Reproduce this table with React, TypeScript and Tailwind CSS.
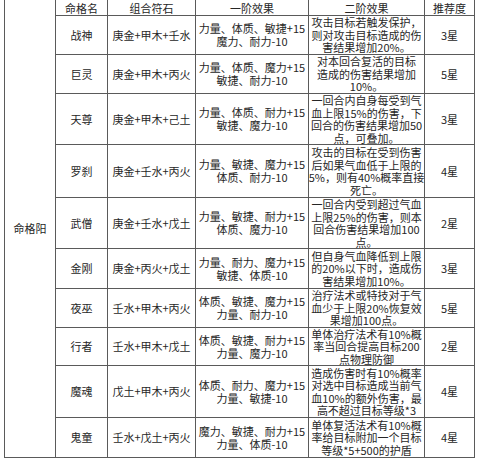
import React from "react";

type Row = {
  name: string;
  combo: string;
  first: string[];
  second: string[];
  rec: string;
};

const rows: Row[] = [
  { name: "战神", combo: "庚金+甲木+壬水", first: ["力量、体质、敏捷+15", "魔力、耐力-10"], second: ["攻击目标若触发保护，", "则对攻击目标造成的伤", "害结果增加20%。"], rec: "3星" },
  { name: "巨灵", combo: "庚金+甲木+丙火", first: ["力量、体质、魔力+15", "敏捷、耐力-10"], second: ["对本回合复活的目标", "造成的伤害结果增加", "10%。"], rec: "5星" },
  { name: "天尊", combo: "庚金+甲木+己土", first: ["力量、体质、耐力+15", "敏捷、魔力-10"], second: ["一回合内自身每受到气", "血上限15%的伤害，下", "回合的伤害结果增加50", "点，可叠加。"], rec: "3星" },
  { name: "罗刹", combo: "庚金+壬水+丙火", first: ["力量、敏捷、魔力+15", "体质、耐力-10"], second: ["攻击的目标在受到伤害", "后如果气血低于上限的", "5%，则有40%概率直接", "死亡。"], rec: "4星" },
  { name: "武僧", combo: "庚金+壬水+戊土", first: ["力量、敏捷、耐力+15", "体质、魔力-10"], second: ["一回合内受到超过气血", "上限25%的伤害，则本", "回合伤害结果增加100", "点。"], rec: "2星" },
  { name: "金刚", combo: "庚金+丙火+戊土", first: ["力量、耐力、魔力+15", "敏捷、体质-10"], second: ["但自身气血降低到上限", "的20%以下时，造成伤", "害结果增加10%。"], rec: "3星" },
  { name: "夜巫", combo: "壬水+甲木+丙火", first: ["体质、敏捷、魔力+15", "力量、耐力-10"], second: ["治疗法术或特技对于气", "血少于上限20%恢复效", "果增加100点。"], rec: "5星" },
  { name: "行者", combo: "壬水+甲木+戊土", first: ["体质、敏捷、耐力+15", "力量、魔力-10"], second: ["单体治疗法术有10%概", "率当回合提高目标200", "点物理防御"], rec: "2星" },
  { name: "魔魂", combo: "戊土+甲木+丙火", first: ["体质、耐力、魔力+15", "力量、敏捷-10"], second: ["造成伤害时有10%概率", "对选中目标造成当前气", "血10%的额外伤害，最", "高不超过目标等级*3"], rec: "4星" },
  { name: "鬼童", combo: "壬水+戊土+丙火", first: ["魔力、敏捷、耐力+15", "力量、体质-10"], second: ["单体复活法术有10%概", "率给目标附加一个目标", "等级*5+500的护盾"], rec: "4星" },
];

const cell = "bg-white flex flex-col items-center justify-center text-center whitespace-nowrap overflow-hidden";

export default function App() {
  return (
    <div
      className="w-[480px] h-[460px] bg-white text-[#262626] text-[11px] leading-[13px]"
      style={{ fontFamily: '"Noto Sans CJK SC", "Noto Sans", sans-serif' }}
    >
      <div className="pl-[4px]">
        <div
          className="grid w-[471px] gap-px bg-[#5a5a5a] px-px pb-px"
          style={{
            gridTemplateColumns: "50px 51px 87px 112px 115px 49px",
            gridTemplateRows: "15px 38px 38px 50px 52px 50px 39px 38px 37px 51px 39px",
          }}
        >
          <div className={cell + " row-span-11"}>命格阳</div>
          <div className={cell + " leading-[15px] pt-[2px]"}>命格名</div>
          <div className={cell + " leading-[15px] pt-[2px]"}>组合符石</div>
          <div className={cell + " leading-[15px] pt-[2px]"}>一阶效果</div>
          <div className={cell + " leading-[15px] pt-[2px]"}>二阶效果</div>
          <div className={cell + " leading-[15px] pt-[2px]"}>推荐度</div>
          {rows.map((r) => (
            <React.Fragment key={r.name}>
              <div className={cell}>{r.name}</div>
              <div className={cell}>{r.combo}</div>
              <div className={cell + " leading-[13px]"}>
                {r.first.map((l) => (
                  <span key={l} className="block leading-[13px]">{l}</span>
                ))}
              </div>
              <div className={cell + " leading-[12.5px]"}>
                {r.second.map((l) => (
                  <span key={l} className="block leading-[12.5px]">{l}</span>
                ))}
              </div>
              <div className={cell}>{r.rec}</div>
            </React.Fragment>
          ))}
        </div>
      </div>
    </div>
  );
}
